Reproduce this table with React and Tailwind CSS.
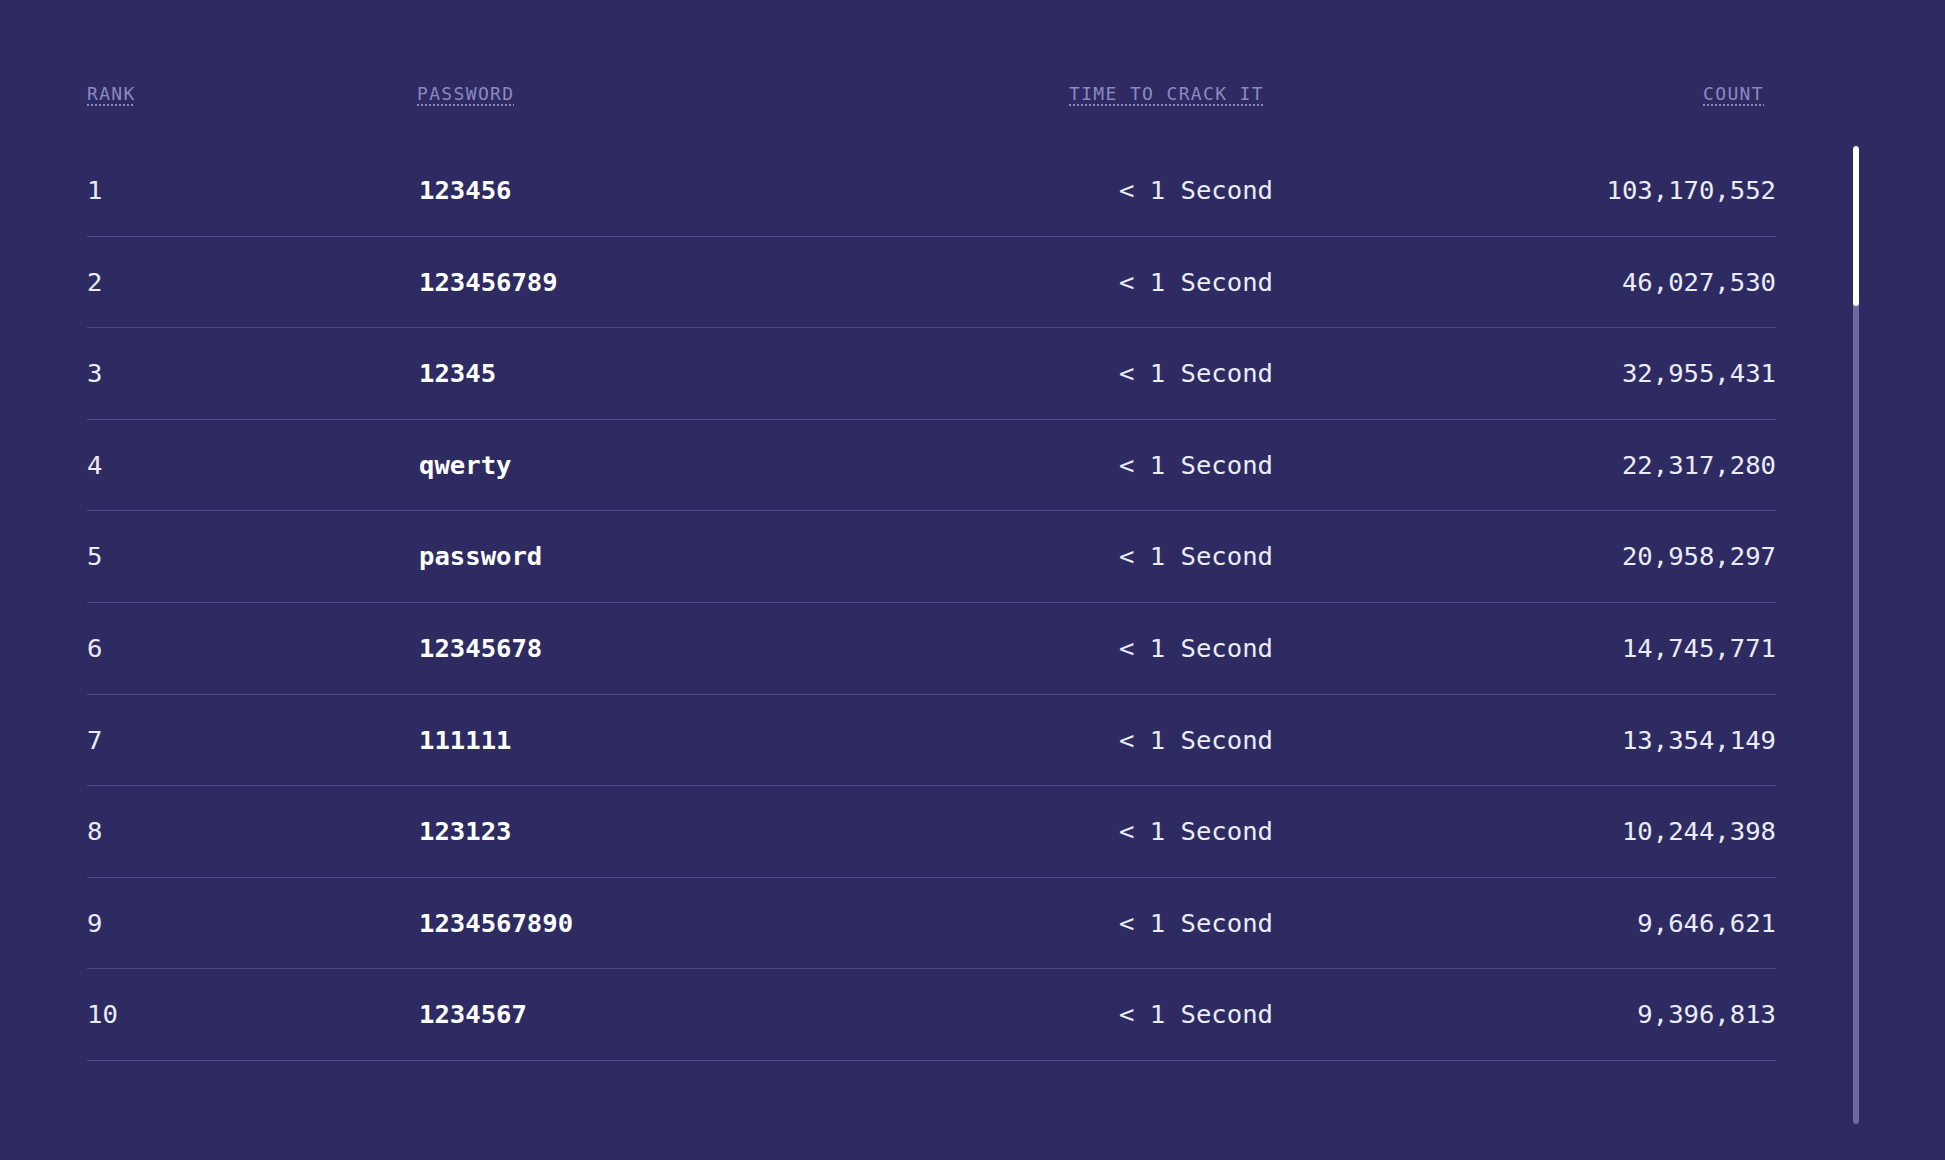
import React from 'react';

// Most common passwords, as listed in the reference table
const ROWS = [
  { rank: 1, password: '123456', time: '< 1 Second', count: '103,170,552' },
  { rank: 2, password: '123456789', time: '< 1 Second', count: '46,027,530' },
  { rank: 3, password: '12345', time: '< 1 Second', count: '32,955,431' },
  { rank: 4, password: 'qwerty', time: '< 1 Second', count: '22,317,280' },
  { rank: 5, password: 'password', time: '< 1 Second', count: '20,958,297' },
  { rank: 6, password: '12345678', time: '< 1 Second', count: '14,745,771' },
  { rank: 7, password: '111111', time: '< 1 Second', count: '13,354,149' },
  { rank: 8, password: '123123', time: '< 1 Second', count: '10,244,398' },
  { rank: 9, password: '1234567890', time: '< 1 Second', count: '9,646,621' },
  { rank: 10, password: '1234567', time: '< 1 Second', count: '9,396,813' }
];

const COLS = 'grid grid-cols-[332px_1fr_260px_503px]';

const HeaderCell = ({ children, className = '' }) => (
  <div className={className}>
    <abbr className="no-underline">
      <span className="underline decoration-dotted decoration-[#8b89c0] underline-offset-[5px] decoration-[1.5px]">
        {children}
      </span>
    </abbr>
  </div>
);

const App = () => {
  return (
    <div
      className="h-[1160px] w-full overflow-hidden bg-[#2e2b63] pl-[87px] pt-[69px]"
      style={{ fontFamily: '"DejaVu Sans Mono", "Liberation Mono", monospace' }}
    >
      <div className="flex">
        <div className="w-[1689px]">
          <div className={`${COLS} h-[48px] items-center text-[18px] uppercase tracking-[1.35px] text-[#8b89c0]`}>
            <HeaderCell>Rank</HeaderCell>
            <HeaderCell className="-ml-[2px]">Password</HeaderCell>
            <HeaderCell className="text-right pr-[9px]">Time to crack it</HeaderCell>
            <HeaderCell className="text-right pr-[12px]">Count</HeaderCell>
          </div>

          <div className="mt-[28px]">
            {ROWS.map((row) => (
              <div
                key={row.rank}
                className={`${COLS} h-[91.6px] items-center border-b border-[#4b4986] text-[25.6px] text-[#ececf6]`}
              >
                <div>{row.rank}</div>
                <div className="font-bold text-white">{row.password}</div>
                <div className="text-right whitespace-pre">{row.time}</div>
                <div className="text-right">{row.count}</div>
              </div>
            ))}
          </div>
        </div>

        {/* scrollbar */}
        <div className="ml-[77px] mt-[77px] flex h-[978px] w-[6px] flex-col overflow-hidden rounded-full bg-[#6c6aa2]">
          <div className="h-[160px] w-full rounded-full bg-white" />
        </div>
      </div>
    </div>
  );
};

export default App;
